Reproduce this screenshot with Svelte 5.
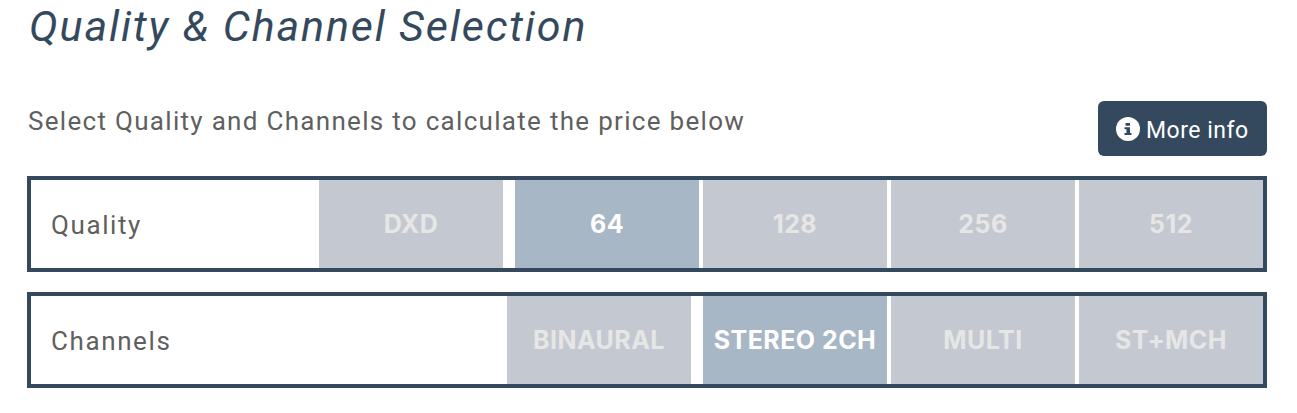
<script>
    const groups = [
        { label: 'Quality', options: ['DXD', '64', '128', '256', '512'], selected: '64' },
        { label: 'Channels', options: ['BINAURAL', 'STEREO 2CH', 'MULTI', 'ST+MCH'], selected: 'STEREO 2CH' }
    ];
</script>

<div class="page">
    <h2>Quality &amp; Channel Selection</h2>

    <div class="intro">
        <p>Select Quality and Channels to calculate the price below</p>
        <button class="info">
            <svg width="24" height="24" viewBox="0 0 24 24">
                <circle cx="12" cy="12" r="12" fill="#fff" />
                <path d="M9.500 6h4.500v2.800H9.500zM8.500 10.300h5.500v5.700h1.500v2H8.500v-2h2v-3.700h-2z" fill="#34495e" />
            </svg>
            <span>More info</span>
        </button>
    </div>

    {#each groups as group}
        <div class="selector">
            <span class="label">{group.label}</span>
            {#each group.options as option}
                <div class="option" class:selected={option === group.selected}>{option}</div>
            {/each}
        </div>
    {/each}
</div>

<style>
    :global(body) {
        background: #fff;
        overflow: hidden;
    }

    .page {
        padding: 0 30px 0 27px;
        font-family: "Roboto", "Liberation Sans", sans-serif;
    }

    h2 {
        margin: 0 0 0 2px;
        height: 56px;
        font-size: 43px;
        line-height: 53px;
        font-weight: 400;
        font-style: italic;
        letter-spacing: 1.85px;
        color: #34495e;
    }

    .intro {
        display: flex;
        justify-content: space-between;
        align-items: flex-start;
        margin-top: 45px;
        margin-bottom: 20px;
    }

    p {
        margin: 4px 0 0 1px;
        font-size: 26px;
        line-height: 32px;
        letter-spacing: 1.3px;
        color: #5f5f5f;
    }

    .info {
        display: flex;
        align-items: center;
        gap: 6px;
        width: 169px;
        height: 55px;
        padding: 0 0 0 18px;
        border: none;
        border-radius: 6px;
        background: #34495e;
        color: #fff;
        font-family: inherit;
        font-size: 23px;
        letter-spacing: 0.5px;
    }

    .info span {
        padding-top: 4px;
    }

    .selector {
        display: flex;
        justify-content: flex-end;
        height: 88px;
        margin-bottom: 20px;
        border: 4px solid #34495e;
    }

    .label {
        margin-right: auto;
        padding-left: 20px;
        font-size: 26px;
        line-height: 90px;
        letter-spacing: 1.6px;
        color: #5f5f5f;
    }

    .option {
        width: 184px;
        margin-left: 4px;
        background: #c4c9d1;
        color: #e6e6e6;
        font-family: "Inter", "Liberation Sans", sans-serif;
        font-size: 25px;
        font-weight: 700;
        letter-spacing: 0.45px;
        line-height: 88px;
        text-align: center;
    }

    .selected {
        margin-left: 12px;
        background: #a7b7c6;
        color: #fff;
    }
</style>
